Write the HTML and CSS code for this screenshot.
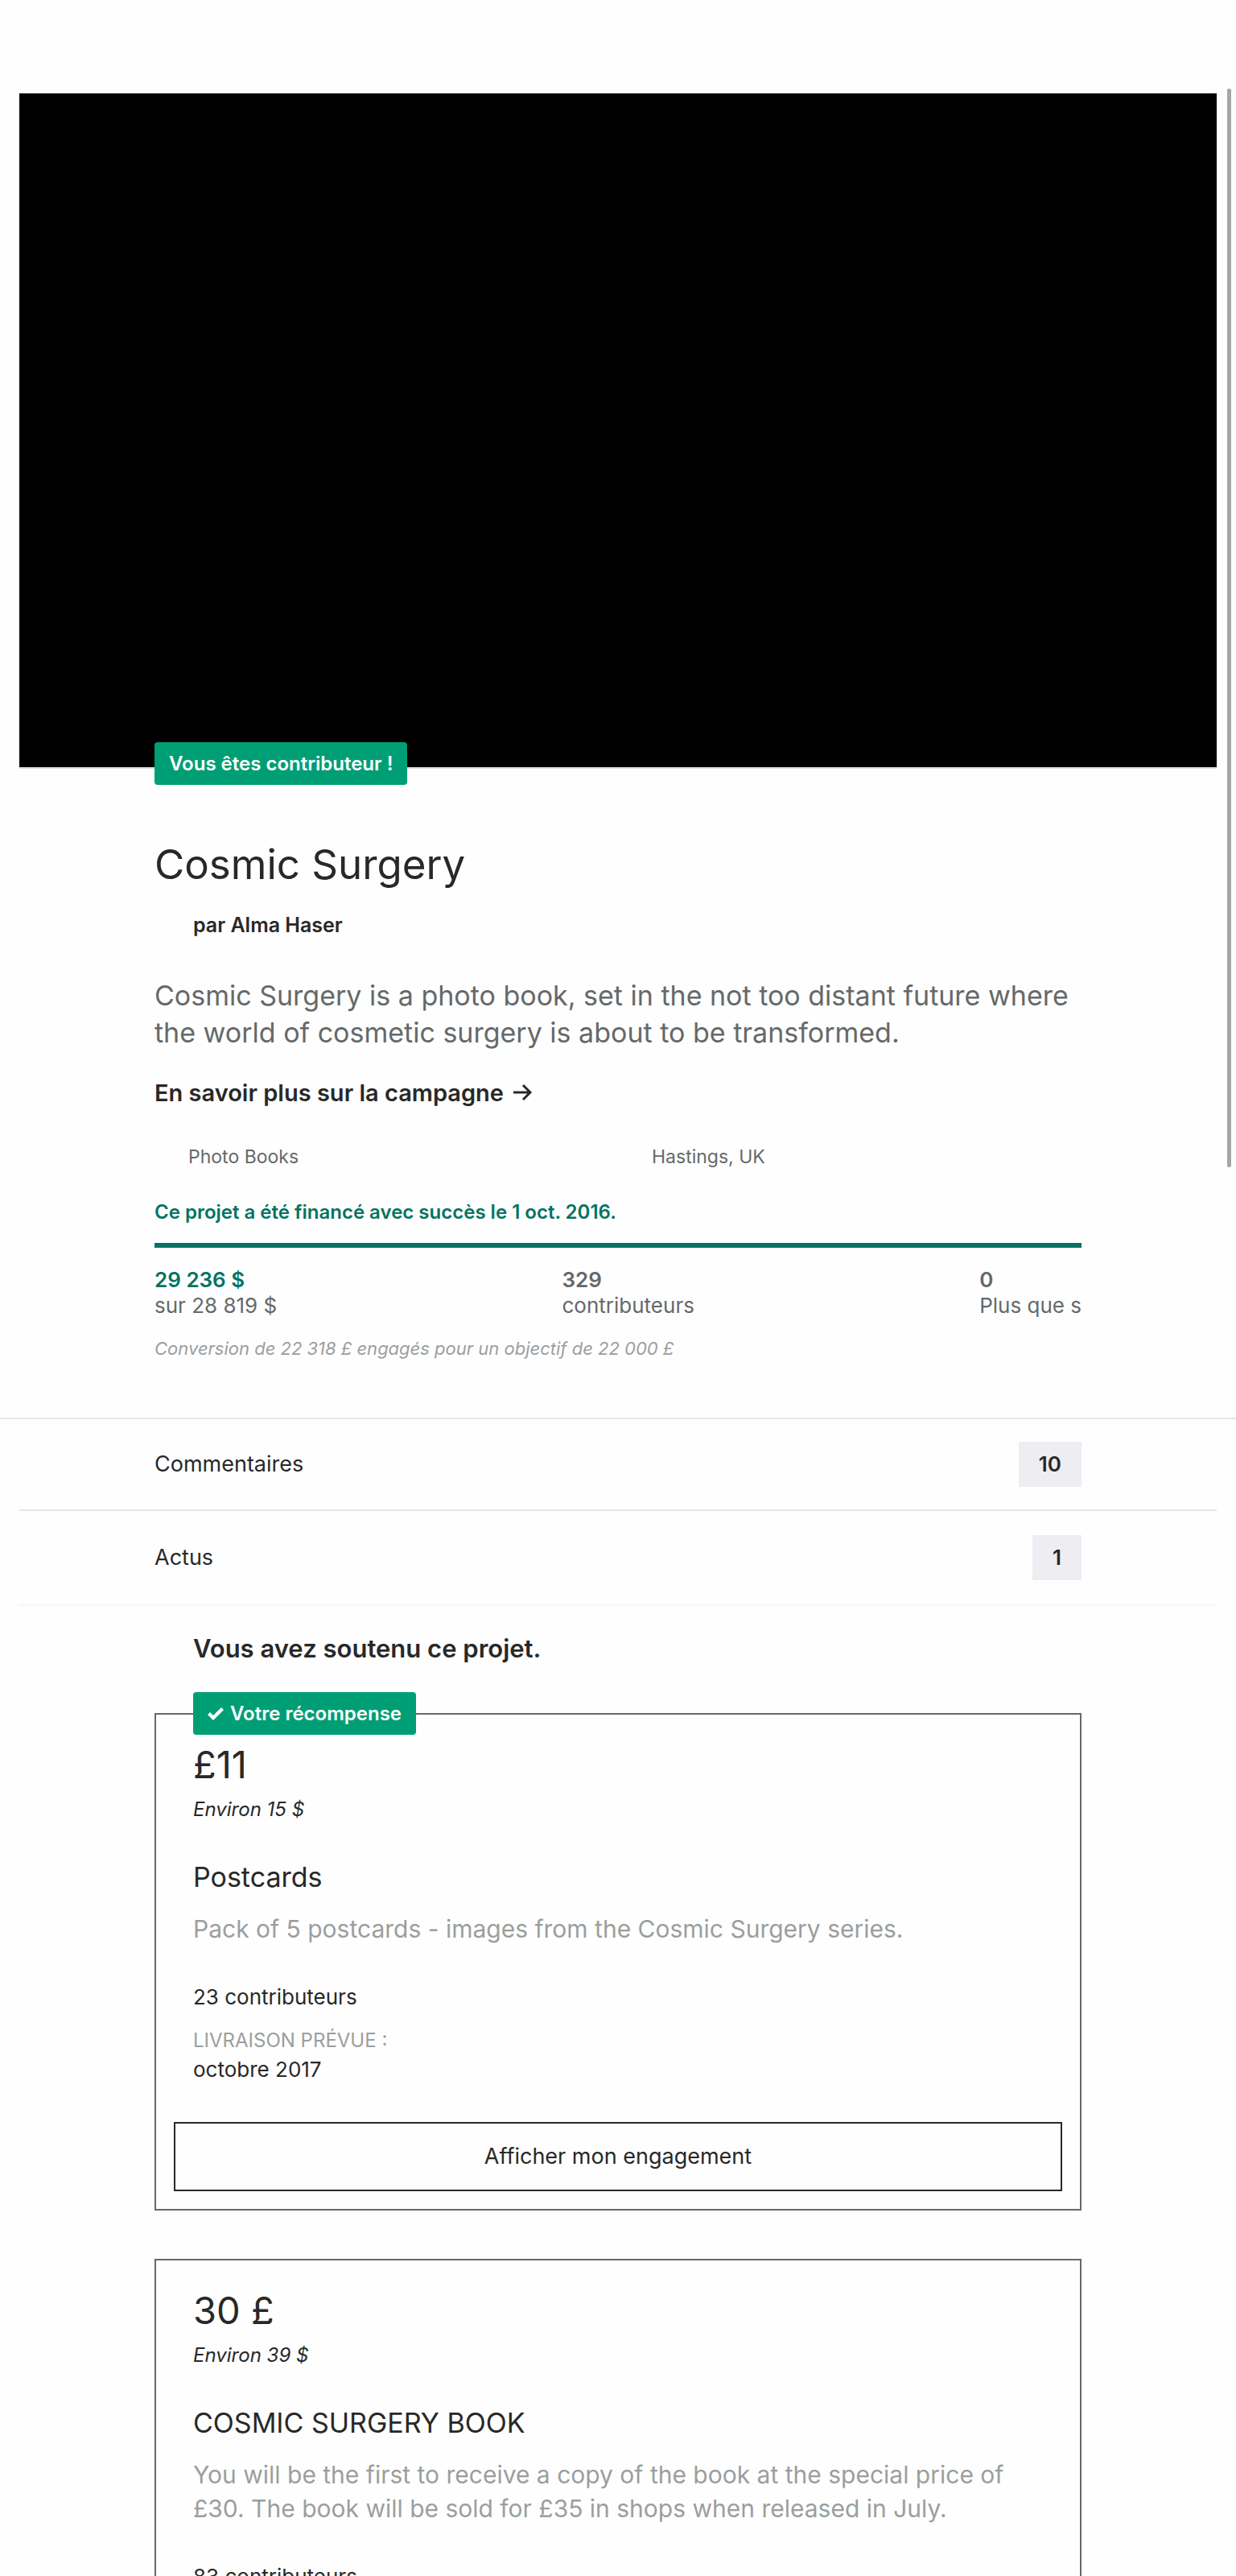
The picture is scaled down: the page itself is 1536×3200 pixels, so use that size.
FILE: index.html
```html
<!DOCTYPE html>
<html lang="fr">
<head>
  <meta charset="utf-8">
  <meta name="viewport" content="width=device-width, initial-scale=1">
  <title>Cosmic Surgery</title>
  <link rel="stylesheet" href="styles.css">
</head>
<body>
  <main class="screen">
    <div class="video"></div>

    <section class="project">
      <span class="badge badge-backer">Vous êtes contributeur !</span>
      <h1 class="title">Cosmic Surgery</h1>
      <p class="author">par Alma Haser</p>
      <p class="blurb">Cosmic Surgery is a photo book, set in the not too distant future where the world of cosmetic surgery is about to be transformed.</p>
      <a class="more" href="#campagne">En savoir plus sur la campagne
        <svg class="arrow" viewBox="0 0 24 22" aria-hidden="true"><path d="M1 11H22M13 2L22 11L13 20"/></svg>
      </a>
      <div class="meta">
        <span>Photo Books</span>
        <span>Hastings, UK</span>
      </div>
      <p class="status">Ce projet a été financé avec succès le 1 oct. 2016.</p>
      <div class="progress"></div>
      <div class="stats">
        <div class="stat stat-pledged"><strong>29 236 $</strong><span>sur 28 819 $</span></div>
        <div class="stat"><strong>329</strong><span>contributeurs</span></div>
        <div class="stat"><strong>0</strong><span>Plus que s</span></div>
      </div>
      <p class="conversion">Conversion de 22 318 £ engagés pour un objectif de 22 000 £</p>
    </section>

    <nav class="links">
      <a class="link-row" href="#commentaires"><span>Commentaires</span><span class="count">10</span></a>
      <a class="link-row link-row-last" href="#actus"><span>Actus</span><span class="count">1</span></a>
    </nav>

    <section class="rewards">
      <h2 class="rewards-title">Vous avez soutenu ce projet.</h2>

      <article class="card">
        <span class="badge badge-reward">
          <svg class="check" viewBox="0 0 20 16" aria-hidden="true"><path d="M0 9L3 6L7 10L17 0L20 3L7 16Z"/></svg>
          Votre récompense
        </span>
        <div class="card-body">
          <p class="price">£11</p>
          <p class="approx">Environ 15 $</p>
          <h3 class="reward-name">Postcards</h3>
          <p class="reward-text">Pack of 5 postcards - images from the Cosmic Surgery series.</p>
          <p class="backers">23 contributeurs</p>
          <p class="delivery-label">LIVRAISON PRÉVUE :</p>
          <p class="delivery-date">octobre 2017</p>
        </div>
        <button class="pledge" type="button">Afficher mon engagement</button>
      </article>

      <article class="card">
        <div class="card-body">
          <p class="price">30 £</p>
          <p class="approx">Environ 39 $</p>
          <h3 class="reward-name">COSMIC SURGERY BOOK</h3>
          <p class="reward-text">You will be the first to receive a copy of the book at the special price of £30. The book will be sold for £35 in shops when released in July.</p>
          <p class="backers">83 contributeurs</p>
        </div>
      </article>
    </section>

    <div class="scroll-thumb"></div>
  </main>
</body>
</html>
```
FILE: styles.css
```css
:root {
  --ink: #282828;
  --slate: #656969;
  --muted: #9b9e9e;
  --green: #009e74;
  --deep-green: #037362;
  --line: #e6e6e6;
  --gutter: 12.5%;
}

* {
  box-sizing: border-box;
}

body,
h1,
h2,
h3,
p {
  margin: 0;
}

body {
  background: #fefefe;
  color: var(--ink);
  font-family: Inter, "Liberation Sans", sans-serif;
}

a {
  color: inherit;
  text-decoration: none;
}

.screen {
  position: relative;
  height: 100vh;
  overflow: hidden;
  padding-top: 116px;
}

.video {
  box-sizing: content-box;
  margin: 0 24px;
  aspect-ratio: 16 / 9;
  background: #000;
  border-bottom: 2px solid #dcdcdc;
}

.badge {
  display: inline-flex;
  align-items: center;
  padding: 12px 18px;
  border-radius: 4px;
  background: var(--green);
  color: #fff;
  font-size: 24px;
  font-weight: 600;
  line-height: 29px;
  white-space: nowrap;
}

.project {
  display: flex;
  flex-direction: column;
  padding: 0 var(--gutter) 72px;
  border-bottom: 2px solid var(--line);
}

.badge-backer {
  align-self: flex-start;
  margin-top: -33px;
}

.title {
  margin-top: 67px;
  font-size: 51px;
  font-weight: 400;
  line-height: 64px;
}

.author {
  margin-top: 27px;
  padding-left: 48px;
  font-size: 25px;
  font-weight: 600;
  line-height: 32px;
}

.blurb {
  margin-top: 49px;
  color: var(--slate);
  font-size: 34px;
  line-height: 46px;
}

.more {
  margin-top: 34px;
  font-size: 29px;
  font-weight: 600;
  line-height: 36px;
}

.arrow {
  width: 24px;
  height: 22px;
  margin-left: 4px;
  fill: none;
  stroke: currentColor;
  stroke-width: 3;
}

.meta {
  display: grid;
  grid-template-columns: 1fr 1fr;
  margin-top: 47px;
  color: var(--slate);
  font-size: 23px;
  line-height: 28px;
}

.meta span {
  padding-left: 42px;
}

.status {
  margin-top: 41px;
  color: var(--deep-green);
  font-size: 24px;
  font-weight: 600;
  line-height: 28px;
}

.progress {
  height: 6px;
  margin-top: 24px;
  background: var(--deep-green);
}

.stats {
  display: flex;
  justify-content: space-between;
  margin-top: 24px;
  color: var(--slate);
  font-size: 26px;
  line-height: 32px;
}

.stat {
  display: flex;
  flex-direction: column;
}

.stat strong {
  font-weight: 600;
}

.stat-pledged strong {
  color: var(--deep-green);
}

.conversion {
  margin-top: 23px;
  color: var(--muted);
  font-size: 22px;
  font-style: italic;
  line-height: 28px;
}

.links {
  margin: 0 24px;
}

.link-row {
  display: flex;
  justify-content: space-between;
  padding: 28px calc(12.5vw - 24px);
  border-bottom: 2px solid var(--line);
  font-size: 27px;
  line-height: 56px;
}

.link-row-last {
  padding-block: 30px;
  border-color: #f6f6f6;
}

.count {
  padding: 0 25px;
  background: #eeedf2;
  font-size: 26px;
  font-weight: 600;
}

.rewards {
  display: flex;
  flex-direction: column;
  gap: 60px;
  padding: 33px var(--gutter) 60px;
}

.rewards-title {
  padding-left: 48px;
  font-size: 31px;
  font-weight: 600;
  line-height: 40px;
}

.card {
  position: relative;
  display: flex;
  flex-direction: column;
  gap: 49px;
  padding: 34px 22px 22px;
  border: 2px solid var(--slate);
}

.badge-reward {
  position: absolute;
  top: -28px;
  left: 46px;
  gap: 8px;
}

.check {
  width: 20px;
  height: 16px;
  fill: currentColor;
}

.card-body {
  padding: 0 24px;
}

.price {
  font-size: 47px;
  line-height: 56px;
}

.approx {
  margin-top: 12px;
  font-size: 24px;
  font-style: italic;
  line-height: 32px;
}

.reward-name {
  margin-top: 46px;
  font-size: 34px;
  font-weight: 400;
  line-height: 44px;
}

.reward-text {
  margin-top: 21px;
  color: var(--muted);
  font-size: 30px;
  line-height: 42px;
}

.backers {
  margin-top: 48px;
  font-size: 26px;
  line-height: 32px;
}

.delivery-label {
  margin-top: 22px;
  color: var(--muted);
  font-size: 24px;
  line-height: 32px;
}

.delivery-date {
  margin-top: 4px;
  font-size: 26px;
  line-height: 32px;
}

.pledge {
  padding: 24px;
  border: 2px solid var(--ink);
  background: transparent;
  color: var(--ink);
  font-family: inherit;
  font-size: 27px;
  line-height: 34px;
}

.scroll-thumb {
  position: absolute;
  top: 110px;
  right: 6px;
  width: 5px;
  height: 1340px;
  border-radius: 3px;
  background: #a6a6a6;
}
```
